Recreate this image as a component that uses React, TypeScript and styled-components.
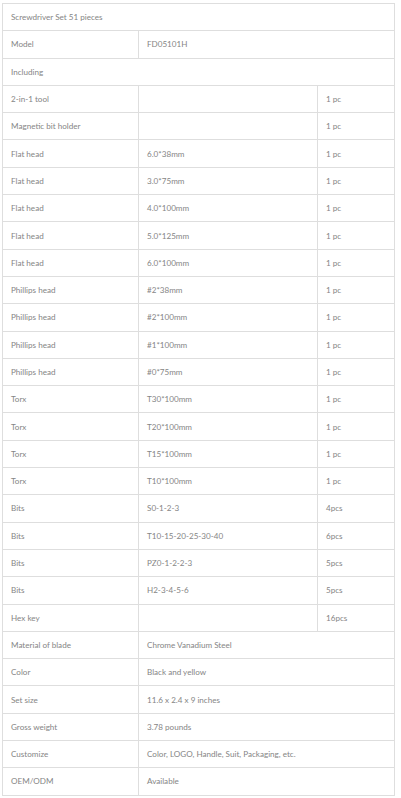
import React from 'react'
import styled, { createGlobalStyle } from 'styled-components'

type Row = { name: string; spec?: string; qty?: string }

const rows: Row[] = [
  { name: 'Screwdriver Set 51 pieces' },
  { name: 'Model', spec: 'FD05101H' },
  { name: 'Including' },
  { name: '2-in-1 tool', spec: '', qty: '1 pc' },
  { name: 'Magnetic bit holder', spec: '', qty: '1 pc' },
  { name: 'Flat head', spec: '6.0*38mm', qty: '1 pc' },
  { name: 'Flat head', spec: '3.0*75mm', qty: '1 pc' },
  { name: 'Flat head', spec: '4.0*100mm', qty: '1 pc' },
  { name: 'Flat head', spec: '5.0*125mm', qty: '1 pc' },
  { name: 'Flat head', spec: '6.0*100mm', qty: '1 pc' },
  { name: 'Phillips head', spec: '#2*38mm', qty: '1 pc' },
  { name: 'Phillips head', spec: '#2*100mm', qty: '1 pc' },
  { name: 'Phillips head', spec: '#1*100mm', qty: '1 pc' },
  { name: 'Phillips head', spec: '#0*75mm', qty: '1 pc' },
  { name: 'Torx', spec: 'T30*100mm', qty: '1 pc' },
  { name: 'Torx', spec: 'T20*100mm', qty: '1 pc' },
  { name: 'Torx', spec: 'T15*100mm', qty: '1 pc' },
  { name: 'Torx', spec: 'T10*100mm', qty: '1 pc' },
  { name: 'Bits', spec: 'S0-1-2-3', qty: '4pcs' },
  { name: 'Bits', spec: 'T10-15-20-25-30-40', qty: '6pcs' },
  { name: 'Bits', spec: 'PZ0-1-2-2-3', qty: '5pcs' },
  { name: 'Bits', spec: 'H2-3-4-5-6', qty: '5pcs' },
  { name: 'Hex key', spec: '', qty: '16pcs' },
  { name: 'Material of blade', spec: 'Chrome Vanadium Steel' },
  { name: 'Color', spec: 'Black and yellow' },
  { name: 'Set size', spec: '11.6 x 2.4 x 9 inches' },
  { name: 'Gross weight', spec: '3.78 pounds' },
  { name: 'Customize', spec: 'Color, LOGO, Handle, Suit, Packaging, etc.' },
  { name: 'OEM/ODM', spec: 'Available' },
]

const GlobalStyle = createGlobalStyle`
  body {
    margin: 0;
    background: #fff;
  }
`

const Page = styled.div`
  padding: 3px 6px 0 2px;
`

const SpecTable = styled.table`
  width: 100%;
  border-collapse: collapse;
  table-layout: fixed;
  font-family: 'Lato', 'Noto Sans', sans-serif;
  font-size: 8.1px;
  color: #858585;
`

const Cell = styled.td`
  height: 27.3px;
  box-sizing: border-box;
  padding: 0 8px;
  border: 1px solid #dedede;
  vertical-align: middle;
  white-space: nowrap;
`

const App = () => {
  return (
    <Page>
      <GlobalStyle />
      <SpecTable>
        <colgroup>
          <col style={{ width: 136 }} />
          <col style={{ width: 179 }} />
          <col />
        </colgroup>
        <tbody>
          {rows.map((r, i) => (
            <tr key={i}>
              {r.spec === undefined ? (
                <Cell colSpan={3}>{r.name}</Cell>
              ) : r.qty === undefined ? (
                <>
                  <Cell>{r.name}</Cell>
                  <Cell colSpan={2}>{r.spec}</Cell>
                </>
              ) : (
                <>
                  <Cell>{r.name}</Cell>
                  <Cell>{r.spec}</Cell>
                  <Cell>{r.qty}</Cell>
                </>
              )}
            </tr>
          ))}
        </tbody>
      </SpecTable>
    </Page>
  )
}

export default App
